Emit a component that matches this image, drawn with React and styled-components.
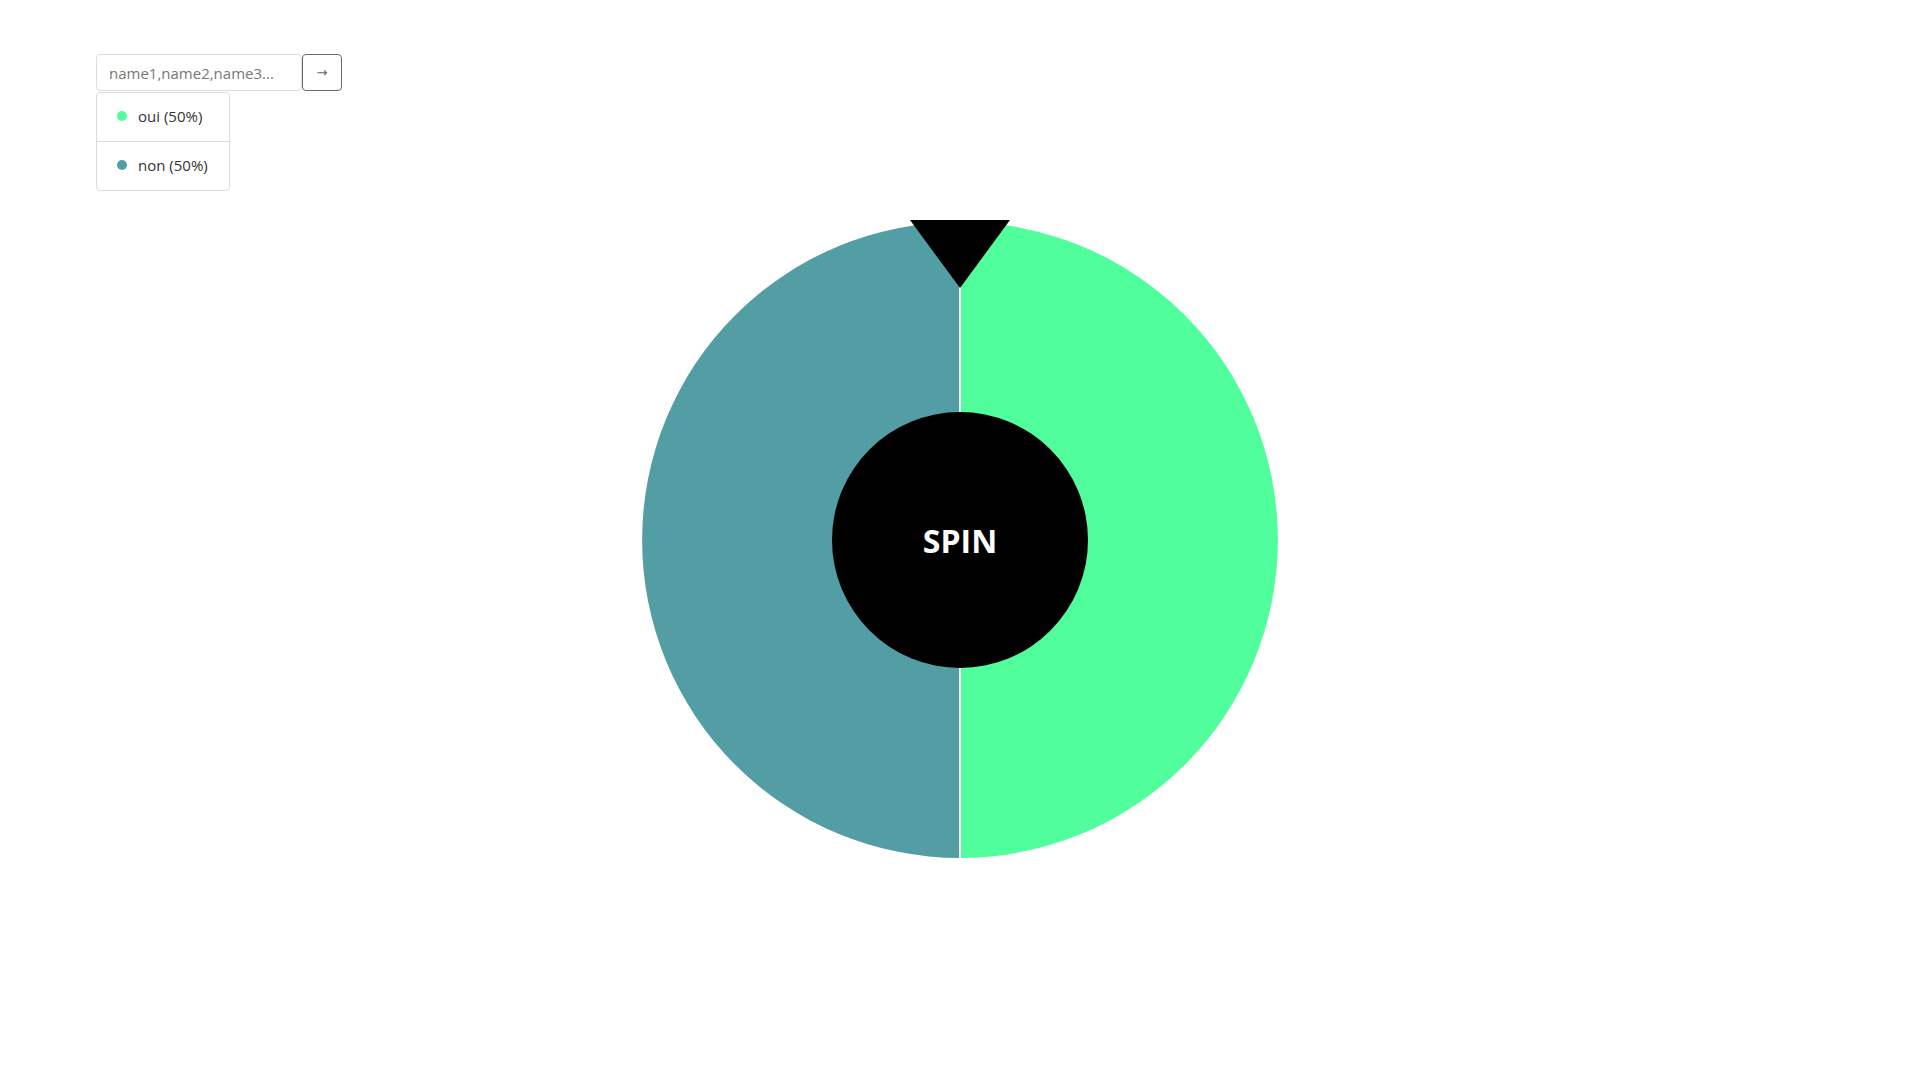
import React from "react";
import styled, { createGlobalStyle } from "styled-components";

const GlobalStyle = createGlobalStyle`
  html, body { margin: 0; padding: 0; background: #fff; }
  body { font-family: "Open Sans", "Noto Sans", sans-serif; color: #333; }
  * { box-sizing: border-box; }
`;

const Page = styled.div`
  min-height: 100vh;
  padding: 54px 96px 0;
`;

const Controls = styled.div`
  display: flex;
  flex-direction: column;
  align-items: flex-start;
  gap: 1px;
`;

const Form = styled.form`
  display: flex;
  margin: 0;
`;

const NameInput = styled.input`
  width: 206px;
  height: 37px;
  padding: 0 12px;
  border: 1px solid #dcdcdc;
  border-radius: 4px;
  font-family: "Open Sans", "Noto Sans", sans-serif;
  font-size: 15px;
  color: #333;
  outline: none;
  &::placeholder { color: #777; }
`;

const GoButton = styled.button`
  width: 40px;
  height: 37px;
  border: 1px solid #6b6b6b;
  border-radius: 4px;
  background: #fff;
  color: #666;
  font-family: "DejaVu Sans", sans-serif;
  font-size: 13px;
  padding: 0;
  cursor: pointer;
`;

const Legend = styled.ul`
  list-style: none;
  margin: 0;
  padding: 0;
  border: 1px solid #dcdcdc;
  border-radius: 4px;
`;

const LegendRow = styled.li`
  display: flex;
  align-items: center;
  gap: 11px;
  height: 48px;
  padding: 0 21px 2px 20px;
  font-size: 15px;
  color: #333;
  & + & { border-top: 1px solid #dcdcdc; height: 49px; }
`;

const Dot = styled.span`
  width: 10px;
  height: 10px;
  border-radius: 50%;
  background: ${(p) => p.$color};
`;

const Stage = styled.div`
  display: flex;
  justify-content: center;
  margin-top: 29px;
`;

const WheelBox = styled.div`
  position: relative;
  width: 636px;
  height: 640px;
`;

const WheelSvg = styled.svg`
  display: block;
`;

const SpinButton = styled.button`
  position: absolute;
  left: 50%;
  top: 320px;
  width: 256px;
  height: 256px;
  margin: -128px 0 0 -128px;
  border: none;
  border-radius: 50%;
  background: #000;
  color: #fff;
  font-family: "Open Sans", "Noto Sans", sans-serif;
  font-weight: 700;
  font-size: 32px;
  padding: 0;
  cursor: pointer;
`;

const segments = [
  { name: "oui", pct: 50, color: "rgb(80,254,156)" },
  { name: "non", pct: 50, color: "rgb(83,157,164)" },
];

export default function App() {
  const cx = 318, cy = 320, r = 318;
  return (
    <>
      <GlobalStyle />
      <Page>
        <Controls>
          <Form onSubmit={(e) => e.preventDefault()}>
            <NameInput placeholder="name1,name2,name3..." />
            <GoButton type="submit">→</GoButton>
          </Form>
          <Legend>
            {segments.map((s) => (
              <LegendRow key={s.name}>
                <Dot $color={s.color} />
                {s.name} ({s.pct}%)
              </LegendRow>
            ))}
          </Legend>
        </Controls>
        <Stage>
          <WheelBox>
            <WheelSvg width="636" height="640" viewBox="0 0 636 640">
              <path d={`M${cx} ${cy - r} A${r} ${r} 0 0 1 ${cx} ${cy + r} Z`} fill={segments[0].color} />
              <path d={`M${cx} ${cy + r} A${r} ${r} 0 0 1 ${cx} ${cy - r} Z`} fill={segments[1].color} />
              <line x1={cx} y1={cy - r} x2={cx} y2={cy + r} stroke="#fff" strokeWidth="2" />
              <polygon points={`${cx - 50},0 ${cx + 50},0 ${cx},68`} fill="#000" />
            </WheelSvg>
            <SpinButton>SPIN</SpinButton>
          </WheelBox>
        </Stage>
      </Page>
    </>
  );
}
